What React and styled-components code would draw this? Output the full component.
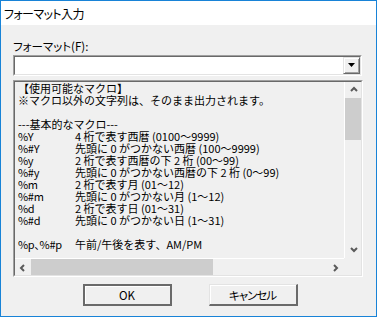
import styled, { createGlobalStyle } from "styled-components";

const GlobalStyle = createGlobalStyle`
  html, body {
    margin: 0;
    padding: 0;
    background: #ffffff;
  }
  body {
    font-family: "Noto Sans CJK JP", "Noto Sans", sans-serif;
  }
`;

const jp = `"Noto Sans CJK JP", "Noto Sans", sans-serif`;

let Window = styled.div`
  width: 377px;
  height: 317px;
  box-sizing: border-box;
  border: 1px solid #1883d7;
  display: flex;
  flex-direction: column;
  background: #f0f0f0;
`;

let TitleBar = styled.div`
  height: 24px;
  flex: none;
  background: #ffffff;
  display: flex;
  align-items: center;
  padding-left: 3px;
  font-family: ${jp};
  font-size: 12px;
  font-feature-settings: "palt";
  letter-spacing: -0.6px;
  color: #000;
`;

let Body = styled.div`
  flex: 1;
  display: flex;
  flex-direction: column;
  padding: 0 12px;
`;

let Label = styled.div`
  margin-top: 14px;
  height: 14px;
  line-height: 14px;
  font-family: ${jp};
  font-size: 11.5px;
  font-feature-settings: "palt";
  color: #000;
`;

// sunken 3D edge used by the combo box and the text box
let Sunken = styled.div`
  box-sizing: border-box;
  border-style: solid;
  border-width: 1px;
  border-color: #a0a0a0 #ffffff #ffffff #a0a0a0;
`;

let ComboBox = styled(Sunken)`
  margin-top: 2px;
  width: 349px;
  height: 21px;
`;

let ComboInner = styled.div`
  box-sizing: border-box;
  height: 100%;
  border-style: solid;
  border-width: 1px;
  border-color: #696969 #e3e3e3 #e3e3e3 #696969;
  background: #ffffff;
  display: flex;
  justify-content: flex-end;
`;

let DropButton = styled.div`
  width: 17px;
  height: 17px;
  box-sizing: border-box;
  background: #f0f0f0;
  border-style: solid;
  border-width: 1px;
  border-color: #e3e3e3 #696969 #696969 #e3e3e3;
  box-shadow: inset 1px 1px 0 #ffffff, inset -1px -1px 0 #a0a0a0;
  display: flex;
  align-items: center;
  justify-content: center;
`;

let TextBox = styled(Sunken)`
  margin-top: 4px;
  width: 350px;
  height: 197px;
`;

let TextInner = styled.div`
  box-sizing: border-box;
  height: 100%;
  border-style: solid;
  border-width: 1px;
  border-color: #696969 #e3e3e3 #e3e3e3 #696969;
  background: #f0f0f0;
  display: grid;
  grid-template-columns: 1fr 17px;
  grid-template-rows: 1fr 17px;
`;

let Content = styled.div`
  padding: 0 0 0 3px;
  font-family: ${jp};
  font-size: 11px;
  line-height: 12px;
  color: #000;
  white-space: nowrap;
`;

let Line = styled.div`
  height: 12px;
`;

let MacroRow = styled.div`
  height: 12px;
  display: grid;
  grid-template-columns: 57px auto;
`;

let Key = styled.span`
  font-feature-settings: "palt";
  letter-spacing: -0.3px;
`;

let VScroll = styled.div`
  border-left: 1px solid #ffffff;
  display: flex;
  flex-direction: column;
`;

let HScroll = styled.div`
  border-top: 1px solid #ffffff;
  display: flex;
  align-items: stretch;
`;

let ArrowCell = styled.div`
  width: ${(p) => (p.$wide ? "17px" : "16px")};
  height: ${(p) => (p.$tall ? "17px" : "16px")};
  flex: none;
  display: flex;
  align-items: center;
  justify-content: center;
`;

let Track = styled.div`
  flex: 1;
  display: flex;
  flex-direction: ${(p) => (p.$vertical ? "column" : "row")};
`;

let Thumb = styled.div`
  background: #cdcdcd;
  flex: none;
`;

let Corner = styled.div`
  background: #f0f0f0;
`;

let ButtonRow = styled.div`
  margin-top: 7px;
  display: flex;
  justify-content: center;
  gap: 37px;
  padding-left: 3px;
`;

let Button = styled.div`
  width: 89px;
  height: 22px;
  box-sizing: border-box;
  background: #f0f0f0;
  display: flex;
  align-items: center;
  justify-content: center;
  font-family: ${jp};
  font-size: 11.5px;
  font-feature-settings: "palt";
  color: #000;
  border-style: solid;
  border-width: ${(p) => (p.$default ? "2px" : "1px 2px 2px 1px")};
  border-color: ${(p) =>
    p.$default ? "#6a6a6a" : "#e3e3e3 #6a6a6a #6a6a6a #e3e3e3"};
  box-shadow: inset 1px 1px 0 #ffffff;
  letter-spacing: ${(p) => (p.$tight ? "-1px" : "0")};
`;

let Chevron = ({ dir }) => {
  const paths = {
    up: "M1 5 L4 2 L7 5",
    down: "M1 2 L4 5 L7 2",
    left: "M5 1 L2 4 L5 7",
    right: "M2 1 L5 4 L2 7",
  };
  return (
    <svg width="8" height="8" viewBox="0 0 8 8">
      <path d={paths[dir]} fill="none" stroke="#5a5a5a" strokeWidth="2" />
    </svg>
  );
};

const macros = [
  ["%Y", "4 桁で表す西暦 (0100〜9999)"],
  ["%#Y", "先頭に 0 がつかない西暦 (100〜9999)"],
  ["%y", "2 桁で表す西暦の下 2 桁 (00〜99)"],
  ["%#y", "先頭に 0 がつかない西暦の下 2 桁 (0〜99)"],
  ["%m", "2 桁で表す月 (01〜12)"],
  ["%#m", "先頭に 0 がつかない月 (1〜12)"],
  ["%d", "2 桁で表す日 (01〜31)"],
  ["%#d", "先頭に 0 がつかない日 (1〜31)"],
];

export default function App() {
  return (
    <>
      <GlobalStyle />
      <Window>
        <TitleBar>フォーマット入力</TitleBar>
        <Body>
          <Label>フォーマット(F):</Label>
          <ComboBox>
            <ComboInner>
              <DropButton>
                <svg width="8" height="5" viewBox="0 0 8 5">
                  <path d="M0 0 H7 L3.5 4 Z" fill="#000" />
                </svg>
              </DropButton>
            </ComboInner>
          </ComboBox>
          <TextBox>
            <TextInner>
              <Content>
                <Line>【使用可能なマクロ】</Line>
                <Line>※マクロ以外の文字列は、そのまま出力されます。</Line>
                <Line />
                <Line>---基本的なマクロ---</Line>
                {macros.map(([k, v]) => (
                  <MacroRow key={k}>
                    <Key>{k}</Key>
                    <span>{v}</span>
                  </MacroRow>
                ))}
                <Line />
                <MacroRow>
                  <Key>%p、%#p</Key>
                  <span>午前/午後を表す、AM/PM</span>
                </MacroRow>
              </Content>
              <VScroll>
                <ArrowCell $wide>
                  <Chevron dir="up" />
                </ArrowCell>
                <Track $vertical>
                  <Thumb style={{ height: 42 }} />
                </Track>
                <ArrowCell $wide>
                  <Chevron dir="down" />
                </ArrowCell>
              </VScroll>
              <HScroll>
                <ArrowCell $tall>
                  <Chevron dir="left" />
                </ArrowCell>
                <Track>
                  <Thumb style={{ width: 182 }} />
                </Track>
                <ArrowCell $tall>
                  <Chevron dir="right" />
                </ArrowCell>
              </HScroll>
              <Corner />
            </TextInner>
          </TextBox>
          <ButtonRow>
            <Button $default>OK</Button>
            <Button $tight>キャンセル</Button>
          </ButtonRow>
        </Body>
      </Window>
    </>
  );
}
